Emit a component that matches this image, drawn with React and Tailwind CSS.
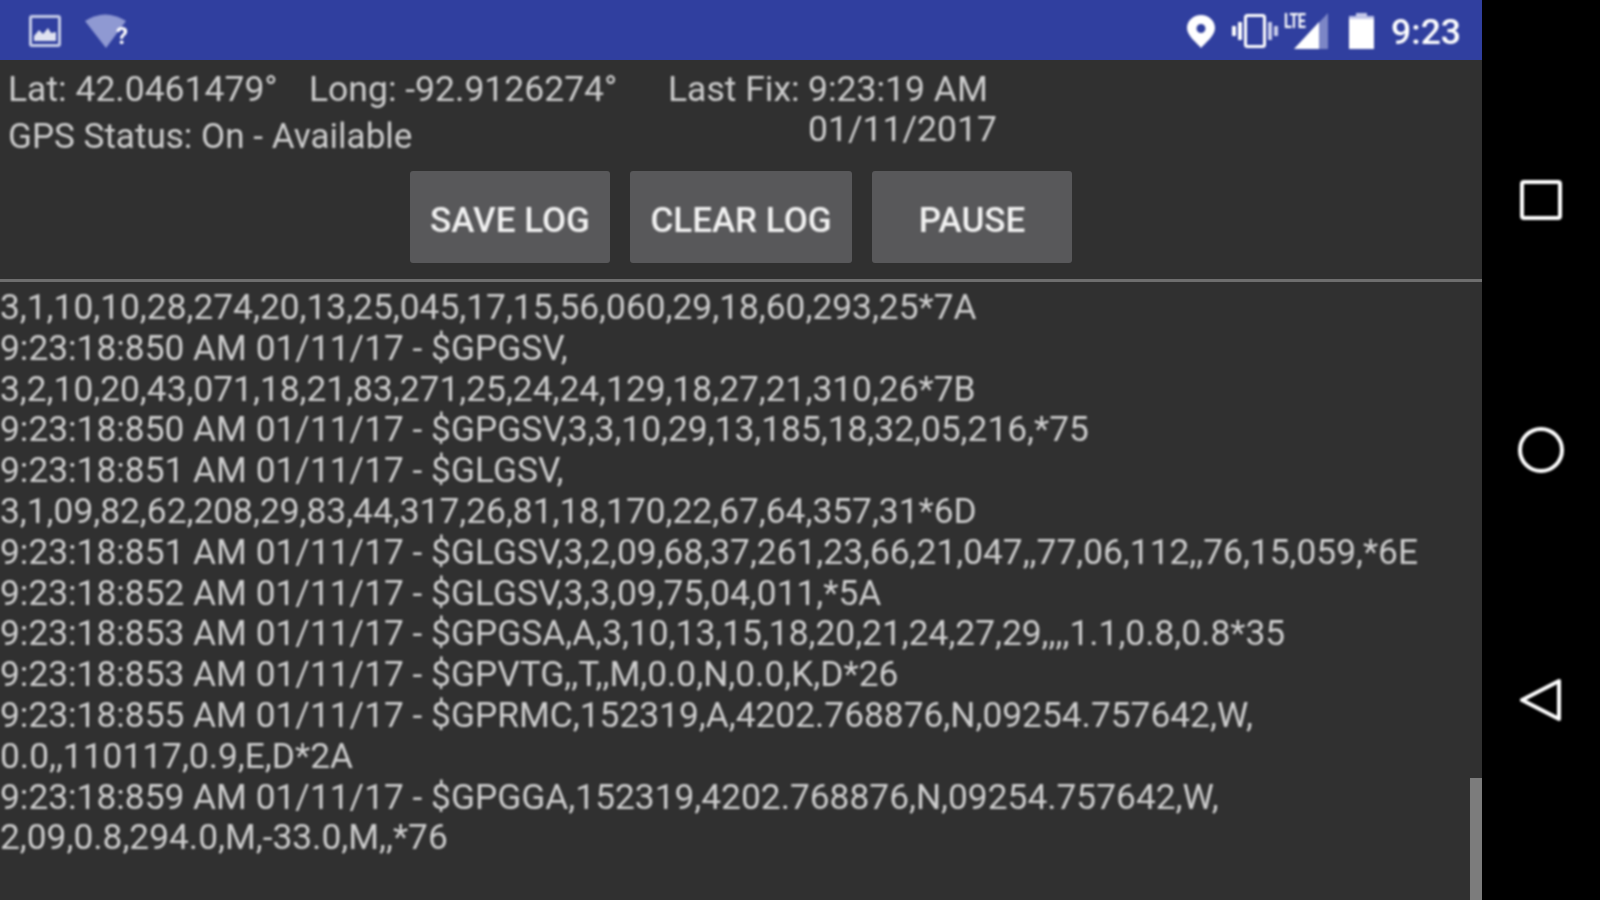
import React from 'react';

const logLines = [
  '3,1,10,10,28,274,20,13,25,045,17,15,56,060,29,18,60,293,25*7A',
  '9:23:18:850 AM 01/11/17 - $GPGSV,',
  '3,2,10,20,43,071,18,21,83,271,25,24,24,129,18,27,21,310,26*7B',
  '9:23:18:850 AM 01/11/17 - $GPGSV,3,3,10,29,13,185,18,32,05,216,*75',
  '9:23:18:851 AM 01/11/17 - $GLGSV,',
  '3,1,09,82,62,208,29,83,44,317,26,81,18,170,22,67,64,357,31*6D',
  '9:23:18:851 AM 01/11/17 - $GLGSV,3,2,09,68,37,261,23,66,21,047,,77,06,112,,76,15,059,*6E',
  '9:23:18:852 AM 01/11/17 - $GLGSV,3,3,09,75,04,011,*5A',
  '9:23:18:853 AM 01/11/17 - $GPGSA,A,3,10,13,15,18,20,21,24,27,29,,,,1.1,0.8,0.8*35',
  '9:23:18:853 AM 01/11/17 - $GPVTG,,T,,M,0.0,N,0.0,K,D*26',
  '9:23:18:855 AM 01/11/17 - $GPRMC,152319,A,4202.768876,N,09254.757642,W,',
  '0.0,,110117,0.9,E,D*2A',
  '9:23:18:859 AM 01/11/17 - $GPGGA,152319,4202.768876,N,09254.757642,W,',
  '2,09,0.8,294.0,M,-33.0,M,,*76',
];

function ImageIcon() {
  return (
    <svg width="32" height="32" viewBox="0 0 32 32" className="opacity-85">
      <rect x="1.5" y="1.5" width="29" height="29" rx="1.5" fill="none" stroke="#dfe3f5" strokeWidth="3" />
      <path d="M5 26 V21 L10 15 L14 19 L19 13 L22 18 L27 17 V26 Z" fill="#fff" />
    </svg>
  );
}

function WifiUnknown() {
  return (
    <div className="relative w-[44px] h-[36px] ml-[24px]">
      <svg width="41" height="35" viewBox="0 0 41 35">
        <path d="M0 8 Q20 -5 41 8 L21 35 Z" fill="#8f99d2" />
      </svg>
      <span className="absolute right-[1px] top-[10px] text-[24px] leading-[26px] font-bold text-white">?</span>
    </div>
  );
}

function Pin() {
  return (
    <svg width="28" height="33" viewBox="0 0 28 33">
      <path fillRule="evenodd" d="M14 0 C6 0 0 6 0 13 C0 21 10 28 14 33 C18 28 28 21 28 13 C28 6 22 0 14 0 Z M14 9 A4.5 4.5 0 1 1 14 18 A4.5 4.5 0 1 1 14 9 Z" fill="#fff" />
    </svg>
  );
}

function Vibrate() {
  return (
    <svg width="46" height="34" viewBox="0 0 46 34">
      <rect x="13.5" y="1.5" width="19" height="31" rx="2" fill="none" stroke="#fff" strokeWidth="3" />
      <rect x="6" y="8" width="4" height="18" fill="#fff" />
      <rect x="0" y="12" width="4" height="10" fill="#fff" />
      <rect x="36" y="8" width="4" height="18" fill="#c9cdea" />
      <rect x="42" y="12" width="4" height="10" fill="#c9cdea" />
    </svg>
  );
}

function Signal() {
  return (
    <div className="relative w-[44px] h-[36px] ml-[6px]">
      <svg width="34" height="36" viewBox="0 0 34 36" className="absolute right-0 top-0">
        <path d="M34 0 V36 H0 Z" fill="#7c86c6" />
        <path d="M25 9 V36 H0 Z" fill="#fff" />
      </svg>
      <span className="absolute left-0 top-[-2px] text-[20px] leading-[20px] font-bold text-white tracking-[-1px] scale-x-[0.72] origin-left">LTE</span>
    </div>
  );
}

function Battery() {
  return (
    <svg width="25" height="36" viewBox="0 0 25 36">
      <path d="M7 0 H18 V3 H25 V36 H0 V3 H7 Z" fill="#fff" />
      <path d="M7 0 H18 V3 H25 V6 H0 V3 H7 Z" fill="#c3c8e8" />
    </svg>
  );
}

function StatusBar() {
  return (
    <div className="h-[60px] shrink-0 bg-[#303f9f]">
      <div className="h-full flex items-center pt-[2px] pl-[29px] pr-[21px] blur-[1px]">
        <ImageIcon />
        <WifiUnknown />
        <div className="flex-1" />
        <Pin />
        <div className="ml-[17px]"><Vibrate /></div>
        <Signal />
        <div className="ml-[21px]"><Battery /></div>
        <span className="ml-[17px] mt-[3px] text-[35.5px] font-medium leading-none text-white">9:23</span>
      </div>
    </div>
  );
}

function LogButton({ label, width }) {
  return (
    <button className={`h-[92px] ${width} rounded-[3px] bg-[#58585a] text-[#f2f2f2] pt-[7px] text-[35px] font-medium leading-none`}>
      <span className="block blur-[1px]">{label}</span>
    </button>
  );
}

function Header() {
  return (
    <div className="h-[111px] shrink-0 flex text-[#cdcdcd] text-[35.5px] leading-[41px] blur-[1px]">
      <div className="w-[668px] pl-2 pt-[9px]">
        <div className="flex">
          <span className="w-[301px]">Lat: 42.0461479°</span>
          <span>Long: -92.9126274°</span>
        </div>
        <div className="mt-[6px] text-[35.1px]">GPS Status: On - Available</div>
      </div>
      <div className="pt-[9px] flex">
        <span className="w-[140px]">Last Fix:</span>
        <div>
          <div>9:23:19 AM</div>
          <div className="-mt-[1px]">01/11/2017</div>
        </div>
      </div>
    </div>
  );
}

export default function App() {
  return (
    <div className="w-[1600px] h-[900px] flex bg-black overflow-hidden font-['Roboto',sans-serif]">
      <div className="relative w-[1482px] flex flex-col bg-[#303030]">
        <StatusBar />
        <Header />

        <div className="h-[92px] shrink-0 flex justify-center gap-5">
          <LogButton label="SAVE LOG" width="w-[200px]" />
          <LogButton label="CLEAR LOG" width="w-[222px]" />
          <LogButton label="PAUSE" width="w-[200px]" />
        </div>

        <div className="h-[3px] shrink-0 mt-[16px] bg-[#6e6e6e] blur-[0.5px]" />

        <div className="pt-[5px] text-[#cdcdcd] text-[35.3px] leading-[40.8px] whitespace-nowrap blur-[1px]">
          {logLines.map((line, i) => (
            <div key={i}>{line}</div>
          ))}
        </div>

        {/* scroll thumb */}
        <div className="absolute right-0 top-[778px] bottom-0 w-[12px] bg-[#7c7c7c]" />
      </div>

      {/* nav bar */}
      <div className="flex-1 flex flex-col items-center justify-center gap-[206px] pr-[1px] blur-[1px]">
        <svg width="44" height="44" viewBox="0 0 44 44">
          <rect x="3" y="4" width="38" height="36" rx="2" fill="none" stroke="#fff" strokeWidth="4" />
        </svg>
        <svg width="46" height="46" viewBox="0 0 46 46" className="-my-[1px]">
          <circle cx="23" cy="23" r="21" fill="none" stroke="#fff" strokeWidth="4" />
        </svg>
        <svg width="44" height="44" viewBox="0 0 44 44">
          <path d="M40 3 V41 L3 22 Z" fill="none" stroke="#fff" strokeWidth="4" strokeLinejoin="round" />
        </svg>
      </div>
    </div>
  );
}
